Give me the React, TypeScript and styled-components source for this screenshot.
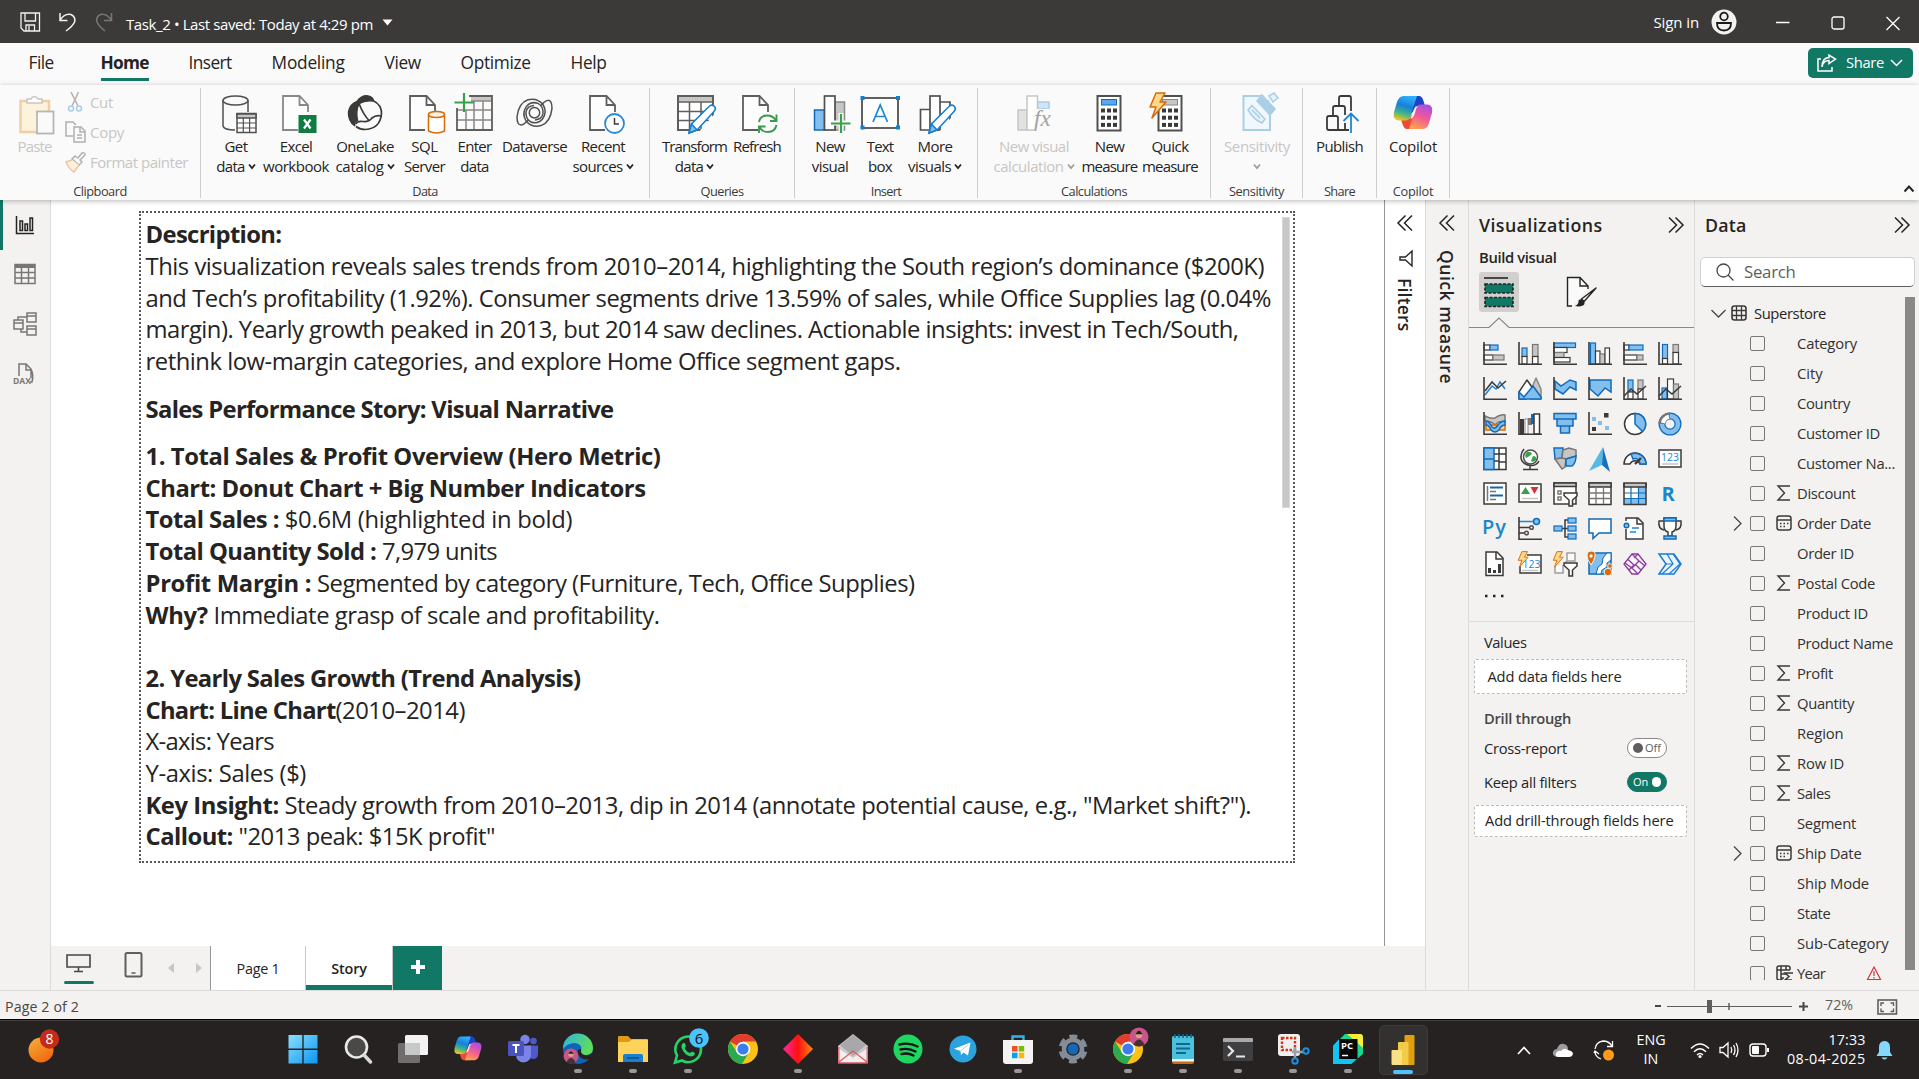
import React, { useLayoutEffect, useRef, useState } from 'react';
import styled, { createGlobalStyle } from 'styled-components';

const GREEN = '#117865';
const INK = '#252423';
const DARK = '#3b3a39';
const BLUE = '#0f6cbd';
const SKY = '#83beec';
const SILVER = '#c8c6c4';

const GlobalStyle = createGlobalStyle`
  * { box-sizing: border-box; }
  html, body { margin: 0; padding: 0; overflow: hidden; }
  body {
    font-family: 'Open Sans', 'Noto Sans', 'Liberation Sans', sans-serif;
    font-stretch: 95%;
    color: ${INK};
    background: #f3f2f1;
  }
  svg { display: block; flex: none; overflow: visible; }
`;

/* Text that is tracked so that its run takes a known length. */
const FitSpan = styled.span<{ $bold?: boolean }>`
  display: inline-block;
  justify-self: start;
  white-space: pre;
  ${(p) => p.$bold && 'font-weight: 700;'}
`;

function Fit({ w, bold, vertical, children }: { w: number; bold?: boolean; vertical?: boolean; children: string }) {
  const ref = useRef<HTMLSpanElement>(null);
  const [spacing, setSpacing] = useState(0);
  useLayoutEffect(() => {
    const el = ref.current;
    if (!el) return;
    const box = el.getBoundingClientRect();
    setSpacing((w - (vertical ? box.height : box.width)) / children.length);
  }, []);
  return (
    <FitSpan ref={ref} $bold={bold} style={{ letterSpacing: spacing }}>
      {children}
    </FitSpan>
  );
}

/* ---------- shell ---------- */

const Shell = styled.div`
  width: 1919px;
  height: 1079px;
  display: flex;
  flex-direction: column;
  overflow: hidden;
`;

const TitleBar = styled.header`
  height: 43px;
  flex: none;
  display: flex;
  align-items: center;
  background: ${DARK};
  color: #fff;
  font-size: 15px;
  padding-left: 20px;
`;
const QuickTools = styled.div`
  display: flex;
  gap: 17px;
  width: 106px;
`;
const FileTitle = styled.div`
  display: flex;
  align-items: center;
  gap: 8.5px;
  line-height: 20px;
  padding-top: 5px;
  flex: 1;
`;
const FileTitleArrow = styled.div`
  margin-top: -4px;
`;
const SignIn = styled.div`
  display: flex;
  align-items: center;
  gap: 12px;
  width: 122.5px;
`;
const WindowButtons = styled.div`
  display: flex;
  align-items: center;
  gap: 41px;
  padding-right: 19px;
`;

const RibbonTabs = styled.nav`
  height: 42px;
  flex: none;
  display: flex;
  align-items: flex-start;
  gap: 40px;
  padding-left: 28.6px;
  background: #fafafa;
`;
const RibbonTab = styled.div<{ $active?: boolean; $wide?: boolean }>`
  height: 38px;
  line-height: 40px;
  font-size: 17.3px;
  font-weight: ${(p) => (p.$active ? 700 : 400)};
  margin-right: ${(p) => (p.$wide ? 7 : 0)}px;
  box-shadow: ${(p) => (p.$active ? `inset 0 -3px ${GREEN}` : 'none')};
`;
const ShareButton = styled.div`
  margin: 5px 6px 0 auto;
  width: 105px;
  height: 30px;
  border-radius: 5px;
  background: ${GREEN};
  color: #fff;
  display: flex;
  align-items: center;
  padding-left: 9px;
  font-size: 14.8px;
  line-height: 30px;
`;
const ShareLabel = styled.span`
  margin: -2px 6px 0 9px;
`;

const Ribbon = styled.div`
  height: 115px;
  flex: none;
  display: flex;
  align-items: flex-start;
  background: #fafafa;
  padding-top: 3px;
  position: relative;
  z-index: 2;
  box-shadow: 0 1px 5px rgba(0, 0, 0, 0.28);
`;
const GroupBox = styled.section<{ $w: number }>`
  width: ${(p) => p.$w}px;
  height: 110px;
  border-right: 1px solid #d0cecc;
  display: flex;
  flex-direction: column;
  padding-top: 4px;
`;
const GroupItems = styled.div<{ $pad: number }>`
  display: flex;
  padding-left: ${(p) => p.$pad}px;
`;
const GroupLabel = styled.div`
  margin-top: auto;
  text-align: center;
  font-size: 12.8px;
  line-height: 14px;
  color: #3b3a39;
`;
const Command = styled.div<{ $w: number; $off?: boolean }>`
  width: ${(p) => p.$w}px;
  display: flex;
  flex-direction: column;
  align-items: center;
  font-size: 15px;
  line-height: 20px;
  color: ${(p) => (p.$off ? '#c8c6c4' : INK)};
`;
const CommandLine = styled.div`
  height: 20px;
  display: flex;
  align-items: center;
  justify-content: center;
  gap: 3px;
  white-space: nowrap;
`;
const ClipRows = styled.div`
  display: flex;
  flex-direction: column;
  margin-left: 10px;
`;
const ClipRow = styled.div`
  height: 30px;
  display: flex;
  align-items: center;
  gap: 3px;
  font-size: 15px;
  line-height: 20px;
  color: #c8c6c4;
  margin-top: -5px;
  margin-bottom: 5px;
`;
const CollapseArrow = styled.div`
  margin: 97px 5px 0 auto;
`;

const Workspace = styled.main`
  height: 790px;
  flex: none;
  display: flex;
  background: #f3f2f1;
`;
const ViewRail = styled.aside`
  width: 51px;
  border-right: 1px solid #dddbd9;
  display: flex;
  flex-direction: column;
`;
const RailItem = styled.div<{ $active?: boolean }>`
  height: 50px;
  display: flex;
  align-items: center;
  justify-content: center;
  padding-right: ${(p) => (p.$active ? 3 : 0)}px;
  padding-bottom: ${(p) => (p.$active ? 0 : 2)}px;
  border-left: ${(p) => (p.$active ? `3px solid ${GREEN}` : '0')};
`;
const Center = styled.div`
  width: 1374px;
  display: flex;
  flex-direction: column;
`;
const CanvasRow = styled.div`
  height: 746px;
  display: flex;
`;
const Canvas = styled.div`
  width: 1333px;
  background: #fff;
  padding: 11px 0 0 88px;
`;
const StoryBox = styled.article`
  width: 1156px;
  height: 652px;
  border: 2px dotted #5a5856;
  display: flex;
  justify-content: space-between;
  padding: 4px 3px 0 4.5px;
  overflow: hidden;
`;
const StoryText = styled.div`
  padding-top: 2.4px;
  font-size: 23.8px;
  line-height: 31.69px;
`;
const StoryLine = styled.div<{ $gap?: boolean }>`
  height: 31.69px;
  white-space: nowrap;
  margin-top: ${(p) => (p.$gap ? 15.8 : 0)}px;
`;
const StoryScroll = styled.div`
  width: 8px;
  height: 291px;
  background: #c8c8c8;
  border: 1px solid #d8d8d8;
`;

const SidePane = styled.aside<{ $w: number; $white?: boolean }>`
  width: ${(p) => p.$w}px;
  background: ${(p) => (p.$white ? '#fff' : '#f3f2f1')};
  border-left: 1px solid ${(p) => (p.$white ? '#979593' : '#dddbd9')};
  display: flex;
  flex-direction: column;
  align-items: center;
  padding-top: 15px;
`;
const VerticalTitle = styled.div`
  writing-mode: vertical-rl;
  font-size: 17.5px;
  font-weight: 600;
  line-height: 24px;
`;

const PageStrip = styled.footer`
  height: 44px;
  display: flex;
  background: #f3f2f1;
`;
const LayoutButton = styled.div<{ $w: number; $active?: boolean }>`
  width: ${(p) => p.$w}px;
  display: flex;
  flex-direction: column;
  align-items: center;
`;
const ActiveMark = styled.div`
  width: 30px;
  height: 3px;
  border-radius: 2px;
  margin-top: 8px;
  background: ${GREEN};
`;
const PageArrows = styled.div`
  width: 51px;
  display: flex;
  gap: 22px;
  padding: 17px 0 0 8px;
  border-right: 1px solid #979593;
`;
const PageTab = styled.div<{ $w: number; $active?: boolean }>`
  width: ${(p) => p.$w}px;
  background: #fff;
  border-right: 1px solid #c8c6c4;
  text-align: center;
  font-size: 14.4px;
  font-weight: ${(p) => (p.$active ? 600 : 400)};
  line-height: 45px;
  box-shadow: ${(p) => (p.$active ? `inset 0 -5px ${GREEN}` : 'none')};
`;
const AddPage = styled.div`
  width: 49px;
  background: ${GREEN};
  display: flex;
  align-items: center;
  justify-content: center;
  padding-bottom: 3px;
`;

/* ---------- visualizations pane ---------- */

const VizPane = styled.aside`
  width: 226px;
  border-left: 1px solid #dddbd9;
  display: flex;
  flex-direction: column;
`;
const PaneHead = styled.div<{ $right: number }>`
  display: flex;
  justify-content: space-between;
  align-items: center;
  height: 24px;
  margin-top: 13px;
  padding: 0 ${(p) => p.$right}px 0 10px;
  font-size: 17.8px;
  font-weight: 600;
  line-height: 24px;
`;
const BuildLabel = styled.div`
  padding-left: 10px;
  margin-top: 10px;
  margin-bottom: 1px;
  font-size: 14.8px;
  font-weight: 600;
  line-height: 20px;
`;
const ModeRow = styled.div`
  display: flex;
  gap: 47px;
  padding: 4px 0 0 10px;
  align-items: center;
`;
const ModeTile = styled.div`
  width: 40px;
  height: 40px;
  border-radius: 3px;
  background: #d2d0ce;
  display: flex;
  align-items: center;
  justify-content: center;
`;
const VizGrid = styled.div`
  display: grid;
  grid-template-columns: repeat(6, 35px);
  grid-auto-rows: 35px;
  padding: 13px 0 0 13.5px;
`;
const More = styled.div`
  padding: 8px 0 0 16px;
  height: 34px;
`;
const WellSection = styled.div`
  border-top: 1px solid #dddbd9;
  padding: 10px 7px 0 5px;
  font-size: 14.7px;
  line-height: 20px;
  display: flex;
  flex-direction: column;
`;
const WellTitle = styled.div<{ $strong?: boolean; $top?: number }>`
  padding-left: 10px;
  height: 20px;
  margin-top: ${(p) => p.$top ?? 0}px;
  ${(p) => p.$strong && 'font-weight: 600; color: #484644;'}
`;
const DropWell = styled.div<{ $h: number; $top: number; $pad: number }>`
  height: ${(p) => p.$h}px;
  margin-top: ${(p) => p.$top}px;
  padding-left: ${(p) => p.$pad}px;
  line-height: ${(p) => p.$h - 3}px;
  background: #fff;
  border: 1px dashed #bebbb8;
  border-radius: 2px;
`;
const ToggleRow = styled.div<{ $top: number }>`
  display: flex;
  justify-content: space-between;
  align-items: center;
  height: 20px;
  margin-top: ${(p) => p.$top}px;
  padding: 0 20px 0 10px;
`;
const Toggle = styled.div<{ $on?: boolean }>`
  width: 40px;
  height: 20px;
  border-radius: 10px;
  border: 1px solid ${(p) => (p.$on ? GREEN : '#8a8886')};
  background: ${(p) => (p.$on ? GREEN : '#fff')};
  color: ${(p) => (p.$on ? '#fff' : '#605e5c')};
  display: flex;
  flex-direction: ${(p) => (p.$on ? 'row-reverse' : 'row')};
  align-items: center;
  gap: ${(p) => (p.$on ? 4 : 2)}px;
  padding: 0 5px;
  font-size: 11px;
`;
const Knob = styled.i<{ $on?: boolean }>`
  width: 10px;
  height: 10px;
  border-radius: 5px;
  background: ${(p) => (p.$on ? '#fff' : '#605e5c')};
`;

/* ---------- data pane ---------- */

const DataPane = styled.aside`
  width: 225px;
  border-left: 1px solid #dddbd9;
  display: flex;
  flex-direction: column;
`;
const SearchBox = styled.div`
  width: 215px;
  height: 30px;
  margin: 20px 0 10px 5px;
  border: 1px solid #d2d0ce;
  border-bottom-color: #605e5c;
  border-radius: 5px;
  background: #fff;
  display: flex;
  align-items: center;
  gap: 10px;
  padding-left: 15px;
  font-size: 16.8px;
  line-height: 30px;
  color: #605e5c;
`;
const TreeArea = styled.div`
  display: flex;
  height: 683px;
  overflow: hidden;
`;
const Tree = styled.div`
  width: 210px;
  padding-top: 1px;
`;
const TreeRoot = styled.div`
  height: 30px;
  display: flex;
  align-items: center;
  padding-left: 16px;
  font-size: 14.8px;
  line-height: 30px;
`;
const RootIcon = styled.div`
  margin: 0 7px 0 5px;
`;
const FieldRow = styled.div`
  height: 30px;
  display: grid;
  grid-template-columns: 17px 26px 21px 1fr 38px;
  align-items: center;
  padding-left: 38px;
  font-size: 14.8px;
  line-height: 30px;
  color: #323130;
  white-space: nowrap;
`;
const CheckBox = styled.div`
  width: 15px;
  height: 15px;
  border: 1px solid #797775;
  border-radius: 2px;
`;
const FieldName = styled.div<{ $wide?: boolean }>`
  grid-column: ${(p) => (p.$wide ? '4 / 6' : '4')};
`;
const TreeScroll = styled.div`
  width: 10px;
  height: 673px;
  background: #8a8886;
`;

/* ---------- status bar ---------- */

const StatusBar = styled.div`
  height: 29px;
  flex: none;
  border-top: 1px solid #dddbd9;
  background: #f3f2f1;
  display: flex;
  align-items: center;
  justify-content: space-between;
  padding: 3px 21px 0 5px;
  font-size: 14.2px;
  line-height: 20px;
  color: #484644;
`;
const ZoomTools = styled.div`
  display: flex;
  align-items: center;
  color: #605e5c;
`;
const ZoomValue = styled.div`
  margin: -3px 24px 0 17px;
`;

/* ---------- taskbar ---------- */

const TaskBar = styled.div`
  height: 60px;
  flex: none;
  background: #252221;
  border-top: 1px solid #000;
  box-shadow: inset 0 1px #43403e;
  display: flex;
  color: #fff;
`;
const WidgetArea = styled.div`
  width: 275.5px;
  padding: 8px 0 0 26px;
`;
const Slot = styled.div<{ $active?: boolean }>`
  width: 55px;
  height: 59px;
  display: flex;
  flex-direction: column;
  align-items: center;
  padding-top: 14px;
`;
const ActiveTile = styled.div`
  width: 49px;
  height: 50px;
  margin-top: -9px;
  padding-top: 9px;
  border-radius: 5px;
  background: #333130;
  border: 1px solid #3e3b3a;
  display: flex;
  flex-direction: column;
  align-items: center;
`;
const RunningDot = styled.i<{ $on?: boolean }>`
  width: ${(p) => (p.$on ? 20 : 8)}px;
  height: 4px;
  border-radius: 2px;
  margin-top: 5px;
  background: ${(p) => (p.$on ? '#4cc2ff' : '#9a9897')};
`;
const Tray = styled.div`
  flex: 1;
  display: flex;
  align-items: center;
  padding-left: 86px;
  padding-top: 1px;
  font-size: 14.3px;
  line-height: 19.5px;
`;
const TrayStack = styled.div<{ $w: number; $right?: boolean }>`
  width: ${(p) => p.$w}px;
  margin-top: -2px;
  display: flex;
  flex-direction: column;
  align-items: ${(p) => (p.$right ? 'flex-end' : 'center')};
`;
const TrayIcon = styled.div<{ $w: number }>`
  width: ${(p) => p.$w}px;
  display: flex;
  justify-content: center;
`;

/* ---------- drawings ---------- */

const Svg = ({ s = 44, h, vb, children }: { s?: number; h?: number; vb?: string; children: React.ReactNode }) => (
  <svg width={s} height={h ?? s} viewBox={vb ?? `0 0 ${s} ${h ?? s}`} fill="none" strokeWidth={1.5}>
    {children}
  </svg>
);

const SmallChevron = ({ c = INK }: { c?: string }) => (
  <Svg s={8} h={8}><path d="M1 2.5 4 6 7 2.5" stroke={c} strokeWidth={1.8} /></Svg>
);
const DoubleChevron = ({ right }: { right?: boolean }) => (
  <Svg s={16} h={16}>
    <path d={right ? 'M1 .5 8.5 8 1 15.5M7.5 .5 15 8 7.500 15.500' : 'M8.500 .5 1 8 8.500 15.500M15 .5 7.500 8 15 15.500'} stroke={INK} />
  </Svg>
);

const Doc = ({ x = 8, c = '#605e5c' }: { x?: number; c?: string }) => (
  <g transform={`translate(${x} 0)`}>
    <path d="M1 4H17.500L26 12.500V38H1Z" fill="#fdfdfd" />
    <path d="M26 20V13L17.500 4H1V38H16M17.500 4V13H26" stroke={c} strokeWidth={1.800} />
  </g>
);
const Pencil = () => (
  <g>
    <path d="M16 41 18.500 32 36.500 14Q39.500 12 41.500 14.500 43.500 17 41 19.500L24 38Z" fill="#fff" stroke="#0f7fd0" />
    <path d="M16 41 18.500 32 24 38Z" fill={SKY} stroke="#0f7fd0" />
  </g>
);
const Calc = ({ x, screen }: { x: number; screen: string }) => (
  <g transform={`translate(${x} 0)`}>
    <rect x={1} y={4} width={23} height={34.500} fill="#fff" stroke="#505050" strokeWidth={2} />
    <rect x={5} y={7.500} width={15} height={5.500} fill={screen} stroke={screen === SILVER ? '#8a8886' : BLUE} strokeWidth={1} />
    {[0, 1, 2].map((r) => [0, 1, 2].map((k) => (
      <rect key={`${r}${k}`} x={4.500 + k * 6} y={16.500 + r * 7.200} width={4} height={4} fill={DARK} />
    )))}
  </g>
);
const Bolt = ({ s = 1 }: { s?: number }) => (
  <path transform={`scale(${s})`} d="M8 1H17L12 10H18L4 26 8 15H2Z" fill="#fcd98a" stroke="#d86a0a" strokeWidth={1.500} strokeLinejoin="round" />
);

const CopilotMark = () => (
  <g>
    <defs>
      <linearGradient id="cpA" x1="0.600" y1="0" x2="0.300" y2="1">
        <stop offset="0" stopColor="#2fb0ff" /><stop offset=".4" stopColor="#1780d8" /><stop offset=".7" stopColor="#3fb489" /><stop offset="1" stopColor="#f2c81c" />
      </linearGradient>
      <linearGradient id="cpB" x1="0.700" y1="0" x2="0.300" y2="1">
        <stop offset="0" stopColor="#a94ee6" /><stop offset=".5" stopColor="#f05a96" /><stop offset="1" stopColor="#ffa04f" />
      </linearGradient>
    </defs>
    <path d="M20 4H28Q31 4 32.500 9L34 14H28Q25 14 24 18L20 22Z" fill="#1a44c2" />
    <path d="M24 37H16Q13 37 11.500 32L10 27.500H16Q19 27 20 23L24 20Z" fill="#ee4c3b" />
    <path d="M12.500 4H26L19.500 24Q18.500 28.500 14 28.500H7.500Q1.500 28 3 20L6 10Q8 4 12.500 4Z" fill="url(#cpA)" />
    <path d="M31.500 37H18L24.500 17Q25.500 12.500 30 12.500H36.500Q42.500 13 41 21L38 31Q36 37 31.500 37Z" fill="url(#cpB)" />
    <path d="M24.500 14.500Q22.500 17 19.500 27 23.500 25.500 24.700 18Q25.500 15 27 14.500Z" fill="#fff" opacity=".9" />
  </g>
);

const swirl = 'M15 28Q11 32.800 8.500 33Q4 33.500 4 25Q5.500 11 15 7.800Q24 5.500 30 12.500Q34.500 20 29.500 27Q25 32.500 18 30Q12.500 27 13 20Q14 14 21 13.500';

const ribbonIcons: Record<string, React.ReactNode> = {
  get: (
    <g stroke="#505050">
      <path d="M9 8.500V34Q10 38 21 38M34 8.500V20" />
      <ellipse cx={21.500} cy={8.500} rx={12.500} ry={4.500} />
      <rect x={23} y={21.500} width={19} height={19} fill="#fff" />
      <path d="M23 22h19v4H23z" fill={SILVER} /><path d="M23 31H42M23 36H42M29.300 26V40M35.600 26V40" strokeWidth={1.200} />
    </g>
  ),
  excel: (
    <g>
      <Doc x={8} c="#8a8886" /><rect x={24.500} y={23} width={18} height={18} fill="#107c41" />
      <path d="M30 27.500 36.500 36.500M36.500 27.500 30 36.500" stroke="#fff" strokeWidth={2.200} />
    </g>
  ),
  lake: (
    <g stroke={DARK}>
      <path d="M30 8.500Q39 13 38.500 22Q37 36.500 22.500 37.500Q17 37.500 13 34.500" strokeWidth={1.700} />
      <path d="M14 9.500Q19 3 25 4Q30 5 30.500 9Q22 8 16 11.500Q12.500 19 14.500 28.500Q10 30 12 34Q5 29 5.500 20Q7 12 14 9.500Z" fill={DARK} />
      <path d="M16 11.500Q20 22 26 28.500M12.500 32Q15 28.500 20 29.500Q26 30 29 26Q33 22.500 38.500 24" strokeWidth={1.700} />
    </g>
  ),
  sql: (
    <g>
      <Doc x={6} /><rect x={24} y={19} width={19} height={23} fill="#fafafa" />
      <path d="M25.500 22.500V39Q33.500 43 41.500 39V22.500" fill="#fff" stroke="#d86a0a" />
      <ellipse cx={33.500} cy={22.500} rx={8} ry={3} fill="#fff3e6" stroke="#d86a0a" />
    </g>
  ),
  enter: (
    <g>
      <path d="M18 4H39V9H18Z" fill={SILVER} />
      <path d="M21 9V38M4 18H39M4 28H39M13 18V38M30 9V38M18 9H39" stroke="#8a8886" />
      <path d="M4 16V38H39V4H16" stroke="#605e5c" strokeWidth={1.800} />
      <path d="M7 6H15V15H7Z" fill="#fafafa" />
      <path d="M11 1V20M1.500 10.500H21" stroke="#37a24a" strokeWidth={2.200} />
    </g>
  ),
  dataverse: (
    <g stroke="#505050" strokeWidth={1.500}>
      <path d={swirl} /><path d={swirl} transform="rotate(180 21.500 20.700)" />
      <circle cx={21.500} cy={20.700} r={5.200} />
    </g>
  ),
  recent: (
    <g>
      <Doc x={8} /><circle cx={33.500} cy={31.500} r={9.500} fill="#fff" stroke="#2b88d8" strokeWidth={1.800} />
      <path d="M33.500 26V32H38" stroke={DARK} />
    </g>
  ),
  transform: (
    <g>
      <rect x={5} y={4} width={35} height={34} fill="#fff" stroke="#605e5c" strokeWidth={2} />
      <path d="M6 5H39V9.500H6Z" fill={SILVER} />
      <path d="M5 10H40M5 19.500H40M5 28.500H40M16.500 10V38M28 10V38" stroke="#605e5c" />
      <path d="M24 42 44 19V42Z" fill="#fafafa" /><Pencil />
    </g>
  ),
  refresh: (
    <g>
      <Doc x={7} /><rect x={23} y={21} width={20} height={21} fill="#fafafa" />
      <path d="M24 30Q25 23.500 32 23.500Q38 23.500 41 28.500M41.500 22.500V29H35M41.500 33Q40 40 33 40Q27 40 24.500 35M24 41V34.500H30.500" stroke="#3a9a50" strokeWidth={1.900} />
    </g>
  ),
  newVisual: (
    <g>
      <rect x={27} y={10} width={9.500} height={28} fill={SILVER} stroke="#8a8886" />
      <rect x={6.500} y={18} width={10} height={20} fill={SKY} stroke={BLUE} />
      <rect x={16.500} y={4} width={10.500} height={34} fill="#fff" stroke="#505050" strokeWidth={1.700} />
      <path d="M33 21V41M23 31H42.500" stroke="#fafafa" strokeWidth={5} />
      <path d="M33 22V41M23 31.500H42.500" stroke="#37a24a" strokeWidth={2.200} />
    </g>
  ),
  textBox: (
    <g>
      <rect x={4} y={6} width={36} height={30} fill="#fff" stroke="#505050" strokeWidth={1.800} />
      {[[2.500, 4], [38, 4], [2.500, 33.500], [38, 33.500]].map(([x, y]) => <rect key={`${x}${y}`} x={x} y={y} width={4} height={4} fill="#0f7fd0" />)}
      <path d="M15 30 22.200 13 29.500 30M17.500 24.500H27" stroke="#1b87d6" strokeWidth={1.700} />
    </g>
  ),
  moreVisuals: (
    <g>
      <path d="M27 38H37V10H27M17 17.500H7.500V38H17" fill="#fff" stroke="#505050" strokeWidth={1.700} />
      <rect x={17} y={4} width={10} height={34} fill="#fff" stroke="#505050" strokeWidth={1.700} />
      <path d="M24 42 44 19V42Z" fill="#fafafa" /><Pencil />
    </g>
  ),
  newCalc: (
    <g>
      <rect x={6} y={18} width={9} height={20} fill="#e3e2e1" stroke="#c8c6c4" />
      <path d="M25.500 10H37V17H25.500Z" fill="#cfe4f6" stroke="#a8cdea" />
      <rect x={15} y={4} width={10.500} height={34} fill="#fff" stroke="#c8c6c4" />
      <rect x={22} y={17} width={22} height={22} fill="#fafafa" />
      <text x={22} y={34} fontSize={23} fontStyle="italic" fontFamily="Liberation Serif, serif" fill="#a3a19f">fx</text>
    </g>
  ),
  newMeasure: <Calc x={8.500} screen="#5aa7ee" />,
  quick: <g><Calc x={9.500} screen={SILVER} /><Bolt /></g>,
  sensitivity: (
    <g stroke="#a9cfe6">
      <path d="M28 4H8.500V38H35V20" fill="#f1f8fc" strokeWidth={2} />
      <path d="M13 18 17 13.500 30 27 27 31Q19 28 13 18ZM17 18 25 26M22 9 27 3 40 17 34 22ZM30 12 34 8M34 4 39 1 43 6 38 10ZM36 22 40 17" fill="#e6f2fa" />
      <path d="M23 9 35 21 39 17 27 5Z" fill="#a9cfe6" />
    </g>
  ),
  publish: (
    <g stroke="#3b3a39" strokeWidth={1.800}>
      <path d="M21 14V6Q21 4 23 4H31Q33 4 33 6V19M15 23V16Q15 14 17 14H25Q27 14 27 16V23M9 26Q9 24 11 24H18Q20 24 20 26V38H11Q9 38 9 36ZM20 38H31M27 31V38" />
      <path d="M33 41V22M25.500 29 33 21.500 40.500 29" stroke="#1b87d6" />
    </g>
  ),
  copilot: <CopilotMark />,
};

const Clipboard = () => (
  <Svg s={36} h={40}>
    <path d="M1.500 6H30V37H1.500Z" fill="#fdf3dc" stroke="#f0cfa5" strokeWidth={2.500} />
    <path d="M8 8V4H12Q15-1 19 4H23V8Z" fill="#fff" stroke="#c8c6c4" />
    <rect x={18} y={16.500} width={16.500} height={22} fill="#fafafa" stroke="#b8b6b4" strokeWidth={1.800} />
  </Svg>
);
const ScissorsIcon = () => (
  <Svg s={22} h={22}>
    <path d="M6 1 13 15M13.500 1 7 15" stroke="#b3b0ad" />
    <circle cx={6} cy={17.500} r={2.500} stroke="#a9cfe6" /><circle cx={14} cy={17.500} r={2.500} stroke="#a9cfe6" />
  </Svg>
);
const CopyIcon = () => (
  <Svg s={22} h={22}>
    <path d="M8 15H1V1H8L11 4" stroke="#b3b0ad" />
    <path d="M9 6H16L20 10V21H9ZM15 6V11H20M12 14H17M12 17H17" stroke="#b3b0ad" fill="#fafafa" />
  </Svg>
);
const BrushIcon = () => (
  <Svg s={22} h={22}>
    <path d="M13 7 17 2Q20 1 20 4L15 9 17 11 14 14 7 8 10 5Z" stroke="#b3b0ad" fill="#fafafa" />
    <path d="M7 9 1 11Q4 18 9 21L14 14" stroke="#f0c79a" fill="#fdf0e0" />
  </Svg>
);

const Axes = () => <path d="M1 0V22.200H24" stroke={DARK} strokeWidth={1.600} />;
type BarSpec = [number, number, number, number, 'b' | 'w' | 'g'];
const Bars = ({ d }: { d: BarSpec[] }) => (
  <g>
    {d.map(([x, y, w, h, k], i) => (
      <rect key={i} x={x} y={y} width={w} height={h} strokeWidth={1.200}
        fill={k === 'b' ? SKY : k === 'g' ? SILVER : '#fff'} stroke={k === 'b' ? BLUE : k === 'g' ? '#797775' : DARK} />
    ))}
    <Axes />
  </g>
);

const vizIcons: React.ReactNode[] = [
  <Bars d={[[1, 3, 6, 5, 'w'], [7, 3, 8, 5, 'b'], [1, 13, 9, 5, 'w'], [10, 13, 11, 5, 'g']]} />,
  <Bars d={[[4, 6, 5, 8.500, 'b'], [4, 14.500, 5, 7.500, 'w'], [14.500, 2.500, 5.500, 12, 'g'], [14.500, 14.500, 5.500, 7.500, 'w']]} />,
  <Bars d={[[1, 1, 21.500, 4.500, 'b'], [1, 5.500, 13, 5, 'w'], [1, 10.500, 10, 5, 'g'], [1, 15.500, 16, 4.500, 'w']]} />,
  <Bars d={[[2.500, 1, 5, 21, 'b'], [7.500, 9, 4.500, 13, 'w'], [12, 12, 5, 10, 'g'], [17, 6, 4.500, 16, 'w']]} />,
  <Bars d={[[1, 3, 5, 5, 'w'], [6, 3, 14, 5, 'b'], [1, 13, 13, 5, 'w'], [14, 13, 6, 5, 'g']]} />,
  <Bars d={[[4.500, 2.500, 5, 14, 'b'], [4.500, 16.500, 5, 5.500, 'w'], [15, 2.500, 5.500, 8, 'g'], [15, 10.500, 5.500, 11.500, 'w']]} />,
  <g><path d="M2 18 9 9 13 12 17 5 22 12" stroke="#1b87d6" /><path d="M2 14 9 5 15 11 23 4" stroke={DARK} /><Axes /></g>,
  <g strokeLinejoin="round"><path d="M12 15 18 1 23 12V22H12Z" fill={SILVER} stroke="#8a8886" /><path d="M1 15 9 3 16 13 8 22H1Z" fill="#fff" stroke={DARK} /><path d="M1 15 6 20 15 9 23 20V22H1Z" fill={SKY} stroke={BLUE} /></g>,
  <g><path d="M2 4 8 9 17 3 23 5V13L17 10 10 17 2 12Z" fill={SKY} stroke={BLUE} /><Axes /></g>,
  <g><path d="M2 3H23V15L17 11 10 19 2 12Z" fill={SKY} stroke={BLUE} /><Axes /></g>,
  <g><Bars d={[[5, 3, 5, 12, 'b'], [5, 15, 5, 7, 'w'], [15, 3, 5, 9, 'g'], [15, 12, 5, 10, 'w']]} /><path d="M1 19 8 12 14 17 23 9" stroke={DARK} /></g>,
  <g><Bars d={[[4, 11, 5, 11, 'b'], [9.500, 2, 6, 20, 'w'], [15.500, 7, 5, 15, 'g']]} /><path d="M1 19 8 12 14 17 23 9" stroke={DARK} /></g>,
  <g><path d="M2 4Q8 7 12 6 18 2 22 3V10Q16 8 12 13 8 9 2 9Z" fill={SILVER} stroke="#797775" /><path d="M3 13H22V18H3Z" fill="#fcc98a" stroke="#d86a0a" /><path d="M3 9Q6 9 9 15 12 18 15 13 18 9 22 9V13Q18 13 16 18 12 22 8 18 6 13 3 13Z" fill={SKY} stroke={BLUE} /><Axes /></g>,
  <g><rect x={2} y={7} width={4} height={15} fill={DARK} /><rect x={7} y={7} width={3} height={15} fill="#fff" stroke="#8a8886" strokeWidth={1} /><rect x={10} y={6} width={4} height={7} fill="#797775" /><rect x={13} y={2} width={3} height={10} fill={BLUE} /><rect x={16} y={2} width={5.500} height={20} fill="#fff" stroke={DARK} /><Axes /></g>,
  <g fill={SKY} stroke={BLUE}><path d="M1 1.500H23V7H1ZM4 7H20V14H4ZM7.500 14H16.500V21H7.500Z" /></g>,
  <g><rect x={16} y={1} width={4.500} height={4.500} fill={DARK} /><rect x={4} y={5} width={4} height={4} fill={SKY} /><rect x={10} y={9} width={4} height={4} fill={SKY} /><rect x={17} y={14} width={4} height={4} fill={SKY} /><rect x={4} y={15} width={4} height={4} fill={DARK} /><Axes /></g>,
  <g><circle cx={12} cy={12} r={10.500} fill="#fff" stroke={DARK} /><path d="M12 1.500A10.500 10.500 0 0 1 19.500 19.500L12 12Z" fill={SKY} stroke={BLUE} /></g>,
  <g><circle cx={12} cy={12} r={8} stroke={BLUE} strokeWidth={7} /><circle cx={12} cy={12} r={8} stroke={SKY} strokeWidth={4.500} /><path d="M4 12A8 8 0 0 1 12 4" stroke="#797775" strokeWidth={7} /><path d="M5 11A8 8 0 0 1 11 4.800" stroke="#fff" strokeWidth={4} /></g>,
  <g><rect x={1} y={1} width={22} height={21.500} fill="#fff" stroke={DARK} /><path d="M1 1H11V22.500H1ZM1 12H11" fill={SKY} stroke={BLUE} /><path d="M11 7H23M16 7V22M11 14H16M16 15H23M16 1V7" stroke={DARK} /></g>,
  <g><circle cx={12.500} cy={10} r={7} fill="#fff" stroke="#505050" /><path d="M9 5Q13 4 14 7 12 9 8 11 6 8 9 5ZM15 9Q19 9 18 13 15 16 13 14Z" fill="#37a24a" /><path d="M6 2Q1 8 4 14 8 19 14 18.500 19 18 21 14M12 19V22M5 22.500H20" stroke={DARK} /></g>,
  <g><path d="M1 1H10L9 11 2 12Z" fill={SKY} stroke={BLUE} /><path d="M10 3 16 1 23 3V9L14 12 9 11ZM2 12 9 11 13 12 12 20 9 22Z" fill={SILVER} stroke="#797775" /><path d="M13 12 23 9Q23 16 19 19L13 19Z" fill={SKY} stroke={BLUE} /></g>,
  <g><path d="M15 0 1 24 14 18Z" fill="#56b8e6" /><path d="M15 0 14 18 22 25Z" fill="#1672b8" /></g>,
  <g><path d="M1 17A11 11 0 0 1 23 17H17A5.500 5.500 0 0 0 7 17Z" fill="#fff" stroke={DARK} /><path d="M8 7A11 11 0 0 1 23 17H17A5 5 0 0 0 10 12Z" fill={SKY} stroke={BLUE} /><path d="M12 17 18 11" stroke={DARK} strokeWidth={2.400} /></g>,
  <g><rect x={1} y={3} width={22} height={17} fill="#fff" stroke={DARK} /><text x={3} y={14} fontSize={10.500} fill="#1b87d6">123</text><path d="M4 17H20" stroke={SILVER} /></g>,
  <g><rect x={1} y={1} width={22} height={21} fill="#fff" stroke={DARK} /><path d="M4.500 4V19" stroke="#797775" /><path d="M7 5.500H20M7 13.500H20" stroke="#1268b0" strokeWidth={2.200} /><path d="M7 9.500H13M7 17.500H13" stroke="#797775" /></g>,
  <g><rect x={1} y={2} width={22} height={18} fill="#fff" stroke={DARK} /><path d="M3 12 7.500 5 12 12Z" fill="#37a24a" /><path d="M12.500 5H20.500L16.500 12Z" fill="#d13438" /><path d="M4 16.500H20" stroke={SILVER} /></g>,
  <g><rect x={1} y={1} width={22} height={21} fill="#fff" stroke={DARK} /><path d="M1 1H23V4.500H1Z" fill={SILVER} stroke={DARK} /><path d="M5 9H8V12H5ZM5 15H8V18H5Z" stroke="#797775" /><path d="M11 11H24V14L19.500 18V24H16V18L11 13.500Z" fill="#fff" stroke={DARK} /></g>,
  <g><rect x={1} y={1} width={22} height={21.500} fill="#fff" stroke={DARK} /><path d="M1 1H23V5H1Z" fill={SILVER} stroke={DARK} /><path d="M1 11H23M1 16.500H23M8 5V22M15.500 5V22" stroke="#797775" strokeWidth={1.300} /></g>,
  <g><rect x={1} y={1} width={22} height={21.500} fill="#fff" /><path d="M15.500 5H23V22.500H1V16.500H15.500Z" fill={SKY} /><path d="M1 11H23M1 16.500H23M8 5V22M15.500 5V22" stroke={BLUE} strokeWidth={1.200} /><path d="M1 1H23V5H1Z" fill={SILVER} stroke={DARK} /><path d="M1 1V22.500H23V1" stroke={DARK} /></g>,
  <text x={3.500} y={18.500} fontSize={20} fontWeight={700} fill="#1b87c9">R</text>,
  <text x={-1} y={16.500} fontSize={20} fontWeight={600} fill="#1b87c9" textLength={24}>Py</text>,
  <g><path d="M1 4.500H15" stroke="#1b87d6" /><circle cx={18.500} cy={4.500} r={3} fill={SKY} stroke={BLUE} /><path d="M1 10.500H12M1 16H7" stroke={DARK} /><circle cx={13.500} cy={10.500} r={1.800} stroke="#505050" /><circle cx={8.500} cy={16} r={1.800} stroke="#505050" /><Axes /></g>,
  <g><path d="M8 11.500H12M15 3H12V20H15M12 11.500H15" stroke={DARK} /><g fill={SKY} stroke={BLUE} strokeWidth={1.200}><rect x={1} y={9} width={8} height={5} /><rect x={15} y={1} width={8} height={5} /><rect x={15} y={9} width={8} height={5} /><rect x={15} y={17} width={8} height={5} /></g></g>,
  <path d="M1 2H23V16H11L5 21.500V16H1Z" fill="#fff" stroke="#1268b0" />,
  <g><path d="M3 4V1H15L20 6V22H3V12" fill="#fff" stroke={DARK} /><path d="M14 1V7H20" stroke={DARK} /><circle cx={3.500} cy={8.500} r={2.300} fill={SKY} stroke={BLUE} /><path d="M9 11H16M7 15H13" stroke="#1b87d6" /></g>,
  <g><path d="M6 4H1Q0 12 6 13M18 4H23Q24 12 18 13" stroke={DARK} /><path d="M6 1H18V9Q18 14 14 15V19H10V15Q6 14 6 9Z" fill="#fff" stroke={DARK} /><path d="M6 1H18V4H6ZM6 19H18V22H6Z" fill={SKY} stroke={BLUE} /></g>,
  <g><path d="M3 0H14L20 6V23.500H3Z" fill="#fff" stroke={DARK} /><path d="M13 0V7H20" stroke={DARK} /><path d="M5 16H8V21H5ZM10 18H13V21H10ZM15 12H18V21H15Z" fill={DARK} /></g>,
  <g><path d="M9 3H23V21H2V14" fill="#fff" stroke={DARK} /><text x={4.500} y={16} fontSize={10.500} fill="#1b87d6">123</text><path d="M4 18.500H20" stroke={SILVER} /><g transform="translate(-1 -1)"><Bolt s={0.620} /></g></g>,
  <g><path d="M14 1H22V9H14ZM2 14V21H10V13M13 14V9" stroke="#a19f9d" fill="#fafafa" /><path d="M11 11H24V14L19.500 18V24H16V18L11 13.500Z" fill="#fff" stroke={DARK} /><g transform="translate(-1 -1)"><Bolt s={0.620} /></g></g>,
  <g><path d="M1 1H23V22H1Z" fill={SKY} stroke="#1268b0" /><path d="M19 1H23V8L19 11V15L14 18 13 22H8L10 15 14 12 15 6Z" fill="#fff" stroke="#1268b0" strokeWidth={1} /><path d="M-1 3Q-1-1 3-1 8-1 7 4 6 9 3 13-1 8-1 3Z" fill="#d86a0a" stroke="#f3f2f1" strokeWidth={1} /><circle cx={3} cy={4} r={1.700} fill="#fff" /><circle cx={20} cy={20} r={3.800} fill="#d86a0a" stroke="#f3f2f1" strokeWidth={1} /><circle cx={22} cy={14} r={2.300} fill="#d86a0a" stroke="#f3f2f1" strokeWidth={0.800} /></g>,
  <g stroke="#8a3a9c" strokeWidth={1.300} strokeLinejoin="round"><path d="M9 2H15L23 12 15 22H9L1 12Z" fill="#fbf3fc" /><path d="M9 2 16 9 9 16 2 11M15 22 9 16M16 9 22 14M12.500 12.500 18 18M5 7.500 11 13 6 18M15 2 11 6" /></g>,
  <g stroke="#1a7bd8"><path d="M1 2H16L23 12 16 22H1L8 12Z" fill="#eaf4fd" /><path d="M9 2 15 12 4 22M8 12H15M15 2 22 12 11 22" strokeWidth={1.200} /></g>,
];

/* ---------- ribbon content ---------- */

type Label = { t: string; w: number; arrow?: boolean };
type CommandSpec = { icon: string; w: number; lines: Label[]; off?: boolean };
type GroupSpec = { label: string; lw: number; w: number; pad: number; items: CommandSpec[] };

const groups: GroupSpec[] = [
  {
    label: 'Data', lw: 25.5, w: 449, pad: 11, items: [
      { icon: 'get', w: 48, lines: [{ t: 'Get', w: 23 }, { t: 'data', w: 28.5, arrow: true }] },
      { icon: 'excel', w: 72, lines: [{ t: 'Excel', w: 32.5 }, { t: 'workbook', w: 66 }] },
      { icon: 'lake', w: 66, lines: [{ t: 'OneLake', w: 57.5 }, { t: 'catalog', w: 48, arrow: true }] },
      { icon: 'sql', w: 53, lines: [{ t: 'SQL', w: 26.5 }, { t: 'Server', w: 41 }] },
      { icon: 'enter', w: 47, lines: [{ t: 'Enter', w: 34 }, { t: 'data', w: 28.5 }] },
      { icon: 'dataverse', w: 73, lines: [{ t: 'Dataverse', w: 65 }] },
      { icon: 'recent', w: 64, lines: [{ t: 'Recent', w: 44 }, { t: 'sources', w: 50, arrow: true }] },
    ],
  },
  {
    label: 'Queries', lw: 43, w: 145, pad: 8, items: [
      { icon: 'transform', w: 73, lines: [{ t: 'Transform', w: 65 }, { t: 'data', w: 28.5, arrow: true }] },
      { icon: 'refresh', w: 52, lines: [{ t: 'Refresh', w: 48 }] },
    ],
  },
  {
    label: 'Insert', lw: 30.500, w: 183, pad: 12, items: [
      { icon: 'newVisual', w: 46, lines: [{ t: 'New', w: 29.5 }, { t: 'visual', w: 36.5 }] },
      { icon: 'textBox', w: 54, lines: [{ t: 'Text', w: 26.5 }, { t: 'box', w: 24 }] },
      { icon: 'moreVisuals', w: 56, lines: [{ t: 'More', w: 35 }, { t: 'visuals', w: 43, arrow: true }] },
    ],
  },
  {
    label: 'Calculations', lw: 66, w: 233, pad: 12, items: [
      { icon: 'newCalc', w: 88, off: true, lines: [{ t: 'New visual', w: 70 }, { t: 'calculation', w: 70, arrow: true }] },
      { icon: 'newMeasure', w: 63, lines: [{ t: 'New', w: 29.5 }, { t: 'measure', w: 56 }] },
      { icon: 'quick', w: 58, lines: [{ t: 'Quick', w: 37 }, { t: 'measure', w: 56 }] },
    ],
  },
  { label: 'Sensitivity', lw: 55, w: 92, pad: 9, items: [{ icon: 'sensitivity', w: 74, off: true, lines: [{ t: 'Sensitivity', w: 66 }, { t: '', w: 0, arrow: true }] }] },
  { label: 'Share', lw: 31, w: 74, pad: 8, items: [{ icon: 'publish', w: 57, lines: [{ t: 'Publish', w: 47 }] }] },
  { label: 'Copilot', lw: 40.500, w: 73, pad: 8, items: [{ icon: 'copilot', w: 56, lines: [{ t: 'Copilot', w: 48 }] }] },
];

const tabs: [string, number][] = [['File', 25], ['Home', 48], ['Insert', 43], ['Modeling', 73], ['View', 36], ['Optimize', 70], ['Help', 36]];

function RibbonGroup({ g }: { g: GroupSpec }) {
  return (
    <GroupBox $w={g.w}>
      <GroupItems $pad={g.pad}>
        {g.items.map((c) => (
          <Command key={c.icon} $w={c.w} $off={c.off}>
            <Svg>{ribbonIcons[c.icon]}</Svg>
            {c.lines.map((l, i) => (
              <CommandLine key={i}>
                {l.t && <Fit w={l.w}>{l.t}</Fit>}
                {l.arrow && <SmallChevron c={c.off ? '#a19f9d' : INK} />}
              </CommandLine>
            ))}
          </Command>
        ))}
      </GroupItems>
      <GroupLabel><Fit w={g.lw}>{g.label}</Fit></GroupLabel>
    </GroupBox>
  );
}

/* ---------- story content ---------- */

type Run = [string, number, boolean?];
const story: { gap?: boolean; runs: Run[] }[] = [
  { runs: [['Description:', 136, true]] },
  { runs: [['This visualization reveals sales trends from 2010–2014, highlighting the South region’s dominance ($200K)', 1118.500]] },
  { runs: [['and Tech’s profitability (1.92%). Consumer segments drive 13.59% of sales, while Office Supplies lag (0.04%', 1125.500]] },
  { runs: [['margin). Yearly growth peaked in 2013, but 2014 saw declines. Actionable insights: invest in Tech/South,', 1093]] },
  { runs: [['rethink low-margin categories, and explore Home Office segment gaps.', 755]] },
  { gap: true, runs: [['Sales Performance Story: Visual Narrative', 468, true]] },
  { gap: true, runs: [['1. Total Sales & Profit Overview (Hero Metric)', 515, true]] },
  { runs: [['Chart: Donut Chart + Big Number Indicators', 500, true]] },
  { runs: [['Total Sales : ', 139.300, true], ['$0.6M (highlighted in bold)', 287.500]] },
  { runs: [['Total Quantity Sold : ', 236.500, true], ['7,979 units', 115]] },
  { runs: [['Profit Margin : ', 171.500, true], ['Segmented by category (Furniture, Tech, Office Supplies)', 597.500]] },
  { runs: [['Why? ', 68, true], ['Immediate grasp of scale and profitability.', 446]] },
  { runs: [] },
  { runs: [['2. Yearly Sales Growth (Trend Analysis)', 435, true]] },
  { runs: [['Chart: Line Chart', 190, true], ['(2010–2014)', 129.500]] },
  { runs: [['X-axis: Years', 128.500]] },
  { runs: [['Y-axis: Sales ($)', 160.500]] },
  { runs: [['Key Insight: ', 139, true], ['Steady growth from 2010–2013, dip in 2014 (annotate potential cause, e.g., "Market shift?").', 966.500]] },
  { runs: [['Callout: ', 93, true], ['"2013 peak: $15K profit"', 256.500]] },
];

/* ---------- data fields ---------- */

type Field = { n: string; w: number; k?: 'sum' | 'date' | 'calc' };
const fields: Field[] = [
  { n: 'Category', w: 60 }, { n: 'City', w: 25.500 }, { n: 'Country', w: 53 }, { n: 'Customer ID', w: 83 },
  { n: 'Customer Na...', w: 98 }, { n: 'Discount', w: 58.500, k: 'sum' }, { n: 'Order Date', w: 74, k: 'date' },
  { n: 'Order ID', w: 57 }, { n: 'Postal Code', w: 78, k: 'sum' }, { n: 'Product ID', w: 71 }, { n: 'Product Name', w: 96 },
  { n: 'Profit', w: 36, k: 'sum' }, { n: 'Quantity', w: 57, k: 'sum' }, { n: 'Region', w: 46.500 },
  { n: 'Row ID', w: 47, k: 'sum' }, { n: 'Sales', w: 33.500, k: 'sum' }, { n: 'Segment', w: 59 },
  { n: 'Ship Date', w: 64.500, k: 'date' }, { n: 'Ship Mode', w: 72 }, { n: 'State', w: 33.500 },
  { n: 'Sub-Category', w: 91.500 }, { n: 'Year', w: 28, k: 'calc' },
];

const fieldGlyph: Record<string, React.ReactNode> = {
  sum: <Svg s={16}><path d="M14 1H2L8.500 8 2 15H14" stroke={DARK} strokeWidth={1.400} /></Svg>,
  date: (
    <Svg s={16}>
      <rect x={1} y={1} width={14} height={14} rx={2.500} stroke={DARK} /><path d="M1 5H15" stroke={DARK} />
      <path d="M4 8.500H5.500M7.500 8.500H9M11 8.500H12.500M4 11.500H5.500M7.500 11.500H9" stroke={DARK} />
    </Svg>
  ),
  calc: (
    <Svg s={18} h={16}>
      <path d="M14 5V3Q14 1 12 1H3Q1 1 1 3V13Q1 15 3 15H7M5 1V15M1 5H14M5 9H10M10 1V5" stroke={DARK} />
      <path d="M17 8H9L13 11.500 9 15H16M5 13H8" stroke={DARK} />
    </Svg>
  ),
};

/* ---------- taskbar icons ---------- */

const ChromeMark = () => (
  <g>
    <circle cx={15} cy={15} r={15} fill="#fbc116" />
    <path d="M15 15 2 7.500A15 15 0 0 1 28 7.500H15Z" fill="#e33b2e" />
    <path d="M2 7.500A15 15 0 0 0 14 30L21 18.500 9 18.500Z" fill="#2da94f" />
    <circle cx={15} cy={15} r={7.200} fill="#fff" /><circle cx={15} cy={15} r={5.600} fill="#3b7ded" />
  </g>
);
const Face = ({ x, y, r }: { x: number; y: number; r: number }) => (
  <g transform={`translate(${x} ${y})`}>
    <circle r={r} fill="#c9558a" /><path d={`M${-r * 0.6} ${r * 0.8}Q0 ${-r * 0.3} ${r * 0.6} ${r * 0.8}Q0 ${r * 1.2} ${-r * 0.6} ${r * 0.8}Z`} fill="#453038" />
    <circle cy={-r * 0.25} r={r * 0.36} fill="#d9a184" /><path d={`M${-r * 0.38} ${-r * 0.3}Q0 ${-r} ${r * 0.38} ${-r * 0.3}Z`} fill="#2a1c1c" />
  </g>
);

type TaskApp = { id: string; icon: React.ReactNode; run?: boolean; active?: boolean };
const apps: TaskApp[] = [
  { id: 'start', icon: <g><defs><linearGradient id="win" x1="0" y1="0" x2="1" y2="1"><stop offset="0" stopColor="#8be0ff" /><stop offset="1" stopColor="#0a95f0" /></linearGradient></defs><path d="M.5 1H14.300V14.600H.5ZM15.700 1H29.500V14.600H15.700ZM.5 16H14.300V29.500H.5ZM15.700 16H29.500V29.500H15.700Z" fill="url(#win)" /></g> },
  { id: 'search', icon: <g><circle cx={13.500} cy={13} r={10.500} fill="#4b4948" stroke="#e9e9e9" strokeWidth={2.600} /><path d="M21 21 27.500 28" stroke="#d5dade" strokeWidth={3.500} strokeLinecap="round" /></g> },
  { id: 'tasks', icon: <g><rect x={7} y={1} width={23} height={20} rx={1.500} fill="#f2f2f2" /><rect x={0} y={9} width={22} height={20} rx={1.500} fill="#7c7b7a" opacity={0.850} /><rect x={7} y={9} width={15} height={12} fill="#c9c8c8" /></g> },
  { id: 'copilot', icon: <g transform="translate(-.5 -.5) scale(.7 .72)"><CopilotMark /></g> },
  { id: 'teams', icon: <g><circle cx={17} cy={5.500} r={4.700} fill="#7b83eb" /><circle cx={25.500} cy={7} r={3.300} fill="#5059c9" /><path d="M21 11.500H30V20Q30 25 25 25 21 25 21 20Z" fill="#5059c9" /><path d="M8 11.500H23V20Q23 28 15.500 28.500 8 28 8 20Z" fill="#7b83eb" /><rect x={0} y={7} width={16} height={15} rx={1.500} fill="#4b53bc" /><path d="M4.500 11H11.500M8 11V19" stroke="#fff" strokeWidth={2} /></g> },
  { id: 'edge', run: true, icon: <g><defs><linearGradient id="edgeA" x1="0" y1="0" x2="1" y2=".4"><stop offset="0" stopColor="#2bb4e8" /><stop offset="1" stopColor="#5fdc5a" /></linearGradient></defs><circle cx={15} cy={15} r={15} fill="#0f64b8" /><path d="M0 15A15 15 0 0 1 30 14Q30 21 23 21 17 21 18 17 20 10 12 9 4 9 0 15Z" fill="url(#edgeA)" /><path d="M30 24Q20 28 15 21 13 15 18 15 17 21 24 21.500 28 21 30 18Z" fill="#252221" /><Face x={8} y={22} r={7.500} /></g> },
  { id: 'explorer', run: true, icon: <g><path d="M0 3Q0 2 1 2H10L13 5H29Q30 5 30 6V12H0Z" fill="#e09b12" /><path d="M0 8H11L14 5.500H29Q30 5.500 30 7V28H0Z" fill="#ffd35a" /><path d="M5 28V22Q5 20 7 20H23Q25 20 25 22V28Z" fill="#1b7fcf" /><path d="M9 24H21" stroke="#0c5a9c" strokeWidth={2} /></g> },
  { id: 'whatsapp', run: true, icon: <g><path d="M2 28.500 4 21.500A12.800 12.800 0 1 1 9 26.500Z" stroke="#27d366" strokeWidth={2.600} /><path d="M10 9Q12 8 13 12 11 14 12 15 14 18 17 19L19 17.500 22 19Q22 22 18 22.500 11 21 8.500 13.500 8 10.500 10 9Z" fill="#27d366" /><circle cx={26} cy={4} r={9.800} fill="#4cc2ff" /><text x={26} y={9.500} fontSize={15} textAnchor="middle" fill="#111">6</text></g> },
  { id: 'chrome', icon: <ChromeMark /> },
  { id: 'diamond', run: true, icon: <g><defs><linearGradient id="dia"><stop offset="0" stopColor="#ff28a0" /><stop offset=".5" stopColor="#ff1010" /><stop offset="1" stopColor="#ff8a10" /></linearGradient></defs><path d="M15 0 30 15 15 30 0 15Z" fill="url(#dia)" /></g> },
  { id: 'mail', icon: <g><path d="M0 12 15 0 30 12V29H0Z" fill="#c9c9cb" /><path d="M2 11 15 1 28 11 15 22Z" fill="#a8a8aa" /><path d="M0 14 15 24 30 14V29H0Z" fill="#f3eff0" /><path d="M1 28 15 17 29 28M.8 13V29H29.200V13" stroke="#dd5a64" strokeWidth={1.300} /></g> },
  { id: 'spotify', icon: <g><circle cx={15} cy={15} r={14.500} fill="#1ed760" /><path d="M6.500 10.500Q16 8 24.500 12.500M7.500 15.500Q15.500 13.500 22.500 17.500M8.500 20Q15 18.500 20.500 21.500" stroke="#191414" strokeWidth={2.400} strokeLinecap="round" /></g> },
  { id: 'telegram', icon: <g><circle cx={15} cy={15} r={13.500} fill="#2ba3de" /><path d="M6 14.800 22.500 8.500 20 21.500 15.500 18.500 13 21 12.500 17Z" fill="#fff" /><path d="M12.500 17 20 10.800" stroke="#9fd2ee" strokeWidth={1} /></g> },
  { id: 'store', run: true, icon: <g><path d="M9.500 7V2.500H20.500V7" stroke="#3bb0e8" strokeWidth={2.400} /><path d="M0 6H30V27Q30 30 27 30H3Q0 30 0 27Z" fill="#f4f4f4" /><path d="M9 12H14.500V17.500H9Z" fill="#f25022" /><path d="M15.700 12H21.200V17.500H15.700Z" fill="#7fba00" /><path d="M9 18.700H14.500V24.200H9Z" fill="#00a4ef" /><path d="M15.700 18.700H21.200V24.200H15.700Z" fill="#ffb900" /></g> },
  { id: 'settings', icon: <g><circle cx={15} cy={15} r={11.500} stroke="#848d97" strokeWidth={6} strokeDasharray="7.200 4.842" transform="rotate(12 15 15)" /><circle cx={15} cy={15} r={9} stroke="#848d97" strokeWidth={4.500} /><circle cx={15} cy={15} r={5.500} fill="#1468b8" /></g> },
  { id: 'chrome-profile', run: true, icon: <g><ChromeMark /><Face x={26} y={3} r={9.500} /></g> },
  { id: 'notepad', run: true, icon: <g><rect x={4} y={2} width={22} height={25} rx={1.500} fill="#4cc0dc" /><path d="M4 26H26V28Q26 30 24 30H6Q4 30 4 28Z" fill="#c96a1e" /><path d="M4 25H26V27.500H4Z" fill="#f4f4f4" /><path d="M8 10H22M8 14.500H22M8 19H18" stroke="#0d6a8c" strokeWidth={2} /><path d="M7 0V4M11 0V4M15 0V4M19 0V4M23 0V4" stroke="#0d6a8c" strokeWidth={1.600} /></g> },
  { id: 'terminal', run: true, icon: <g><rect x={0} y={4} width={30} height={23} rx={1.500} fill="#3f3f41" /><path d="M0 8V5Q0 4 1 4H29Q30 4 30 5V8Z" fill="#a8a8a8" /><path d="M5 12 10 17 5 22" stroke="#e8e8e8" strokeWidth={2.200} /><path d="M13 22.500H22" stroke="#e8e8e8" strokeWidth={2} /></g> },
  { id: 'snip', run: true, icon: <g><rect x={0} y={0} width={22} height={22} rx={3} fill="#f1eeee" /><rect x={4} y={4} width={13} height={12} stroke="#d8341c" strokeWidth={2.400} strokeDasharray="2.500 1.500" /><path d="M17 13V24M14 18H26" stroke="#9aa3ad" strokeWidth={2.500} /><circle cx={17} cy={27} r={2.700} stroke="#1b90e0" strokeWidth={2} /><circle cx={28} cy={17} r={2.700} stroke="#1b90e0" strokeWidth={2} /></g> },
  { id: 'pycharm', run: true, icon: <g><path d="M12 0H27Q30 0 30 4V20L18 30H0V12Z" fill="#18d68c" /><path d="M14 0H27Q30 0 30 4V14Z" fill="#f8ec3c" /><path d="M0 12 6 5V24H24L18 30H3Q0 30 0 27Z" fill="#12c4f2" /><rect x={6} y={5} width={18.500} height={20} fill="#060606" /><text x={8} y={14.500} fontSize={9.500} fontWeight={700} fill="#fff">PC</text><path d="M9 21.500H15" stroke="#fff" /></g> },
  { id: 'powerbi', active: true, icon: <g><rect x={16.500} y={0} width={10} height={30} rx={1} fill="#e0a010" /><rect x={10} y={7} width={10.500} height={23} rx={1} fill="#f2cb47" /><rect x={3.500} y={15} width={10.500} height={15} rx={1} fill="#fbe086" /></g> },
];

/* ---------- page ---------- */

export default function App() {
  return (
    <Shell>
      <GlobalStyle />
      <TitleBar>
        <QuickTools>
          <Svg s={21} h={20}>
            <path d="M1 1H19.500V19H4L1 16ZM5 1V9H15.500V1M6 19V13H14.500V19M9 14V19" stroke="#f3f2f1" strokeWidth={1.300} />
          </Svg>
          <Svg s={20} h={20}><path d="M2 1V8.500H9.500M2 8Q7 1 13 2.500 18 5 16.500 10 15 14 8 19" stroke="#f3f2f1" /></Svg>
          <Svg s={18} h={20}><path d="M16.500 1V8.500H9M16.500 8Q11 1 5.500 2.500 .5 5 2 10 3.500 14 10 19" stroke="#797775" /></Svg>
        </QuickTools>
        <FileTitle>
          <Fit w={247}>Task_2 • Last saved: Today at 4:29 pm</Fit>
          <FileTitleArrow><Svg s={12} h={7}><path d="M.5 .5H10.500L5.500 6.500Z" fill="#fff" /></Svg></FileTitleArrow>
        </FileTitle>
        <SignIn>
          <Fit w={45.5}>Sign in</Fit>
          <Svg s={26}>
            <circle cx={13} cy={13} r={12.500} fill="#f3f2f1" />
            <circle cx={13} cy={7.500} r={3.800} stroke="#1b1a19" strokeWidth={1.800} />
            <path d="M6 14H20Q20 21.500 13 21.500 6 21.500 6 14Z" stroke="#1b1a19" strokeWidth={1.800} />
          </Svg>
        </SignIn>
        <WindowButtons>
          <Svg s={14}><path d="M0 7.500H13.500" stroke="#fff" /></Svg>
          <Svg s={14}><rect x={1} y={2} width={12} height={12} rx={2} stroke="#fff" strokeWidth={1.300} /></Svg>
          <Svg s={14}><path d="M.5 2 13.500 15M13.500 2 .5 15" stroke="#fff" strokeWidth={1.300} /></Svg>
        </WindowButtons>
      </TitleBar>

      <RibbonTabs>
        {tabs.map(([t, w], i) => (
          <RibbonTab key={t} $active={t === 'Home'} $wide={i === 0}><Fit w={w}>{t}</Fit></RibbonTab>
        ))}
        <ShareButton>
          <Svg s={20} h={18}>
            <path d="M4 5H1V17H15V13M5 13Q6 6.500 12 6.500V9.500L18.500 5 12 1V3.500Q5 4 5 13Z" stroke="#fff" strokeWidth={1.500} />
          </Svg>
          <ShareLabel><Fit w={38}>Share</Fit></ShareLabel>
          <Svg s={13} h={8}><path d="M1 1 6.500 6.500 12 1" stroke="#fff" /></Svg>
        </ShareButton>
      </RibbonTabs>

      <Ribbon>
        <GroupBox $w={201}>
          <GroupItems $pad={14}>
            <Command $w={41} $off>
              <Svg s={44} vb="-6 -3 44 44"><Clipboard /></Svg>
              <CommandLine><Fit w={34}>Paste</Fit></CommandLine>
            </Command>
            <ClipRows>
              <ClipRow><ScissorsIcon /><Fit w={23}>Cut</Fit></ClipRow>
              <ClipRow><CopyIcon /><Fit w={34}>Copy</Fit></ClipRow>
              <ClipRow><BrushIcon /><Fit w={98}>Format painter</Fit></ClipRow>
            </ClipRows>
          </GroupItems>
          <GroupLabel><Fit w={53.5}>Clipboard</Fit></GroupLabel>
        </GroupBox>
        {groups.map((g) => <RibbonGroup key={g.label} g={g} />)}
        <CollapseArrow><Svg s={10} h={8}><path d="M.5 6.500 5 1.500 9.500 6.500" stroke={INK} strokeWidth={2} /></Svg></CollapseArrow>
      </Ribbon>

      <Workspace>
        <ViewRail>
          <RailItem $active><Svg s={20}><path d="M1.500 1V18.500H19M5 6H7.500V15.500H5ZM10 9H12.500V15.500H10ZM15 3H17.500V15.500H15Z" stroke={INK} strokeWidth={1.500} /></Svg></RailItem>
          <RailItem><Svg s={22}><rect x={1} y={1.500} width={20} height={19} stroke="#797775" /><path d="M1 3.500H21" stroke="#797775" strokeWidth={3} /><path d="M1 9.500H21M1 15H21M7.500 4V20M14.500 4V20" stroke="#797775" /></Svg></RailItem>
          <RailItem><Svg s={24}><path d="M1 8H10V17H1ZM1 11H10M14 1H23V10H14ZM14 4H23M14 14H23V23H14ZM14 17H23M5 8V5H14M8 17V20H14" stroke="#797775" /></Svg></RailItem>
          <RailItem>
            <Svg s={22} vb="0 0 22 22">
              <path d="M5 13V1H12L17 6V15M12 1V7H17M17 6Q20 12 18 19H15" stroke="#797775" />
              <path d="M0 13H16V23H0Z" fill="#f3f2f1" />
              <text x={-1} y={21} fontSize={8.500} fontWeight={700} fill="#797775">DAX</text>
            </Svg>
          </RailItem>
        </ViewRail>

        <Center>
          <CanvasRow>
            <Canvas>
              <StoryBox>
                <StoryText>
                  {story.map((l, i) => (
                    <StoryLine key={i} $gap={l.gap}>
                      {l.runs.map(([t, w, b], k) => <Fit key={k} w={w} bold={b}>{t}</Fit>)}
                    </StoryLine>
                  ))}
                </StoryText>
                <StoryScroll />
              </StoryBox>
            </Canvas>
            <SidePane $w={41} $white>
              <DoubleChevron />
              <Svg s={16} h={47} vb="-2 -18.500 16 47"><path d="M13 1.500V16.500L6.500 10.500H1V7.500H6.500Z" stroke={INK} strokeWidth={1.400} /></Svg>
              <VerticalTitle><Fit w={53.5} vertical>Filters</Fit></VerticalTitle>
            </SidePane>
          </CanvasRow>
          <PageStrip>
            <LayoutButton $w={56} $active>
              <Svg s={26} h={27}><path d="M1 9H24V21H1ZM12.500 21V25M8 25.500H17" stroke="#484644" strokeWidth={1.600} /></Svg>
              <ActiveMark />
            </LayoutButton>
            <LayoutButton $w={53}>
              <Svg s={17} h={32} vb="0 -6 17 32"><rect x={0.5} y={1} width={16} height={23.500} rx={1.500} stroke="#605e5c" strokeWidth={2} /><path d="M6.500 21H10.500" stroke="#605e5c" /></Svg>
            </LayoutButton>
            <PageArrows>
              <Svg s={6} h={10}><path d="M6 0V10L0 5Z" fill="#c8c6c4" /></Svg>
              <Svg s={6} h={10}><path d="M0 0V10L6 5Z" fill="#c8c6c4" /></Svg>
            </PageArrows>
            <PageTab $w={95}><Fit w={43}>Page 1</Fit></PageTab>
            <PageTab $w={87} $active><Fit w={35.5}>Story</Fit></PageTab>
            <AddPage><Svg s={14}><path d="M7 0V14M0 7H14" stroke="#fff" strokeWidth={4} /></Svg></AddPage>
          </PageStrip>
        </Center>

        <SidePane $w={43}>
          <DoubleChevron />
          <Svg s={4} h={19}>{null}</Svg>
          <VerticalTitle><Fit w={134} vertical>Quick measure</Fit></VerticalTitle>
        </SidePane>

        <VizPane>
          <PaneHead $right={10}><Fit w={123.5}>Visualizations</Fit><DoubleChevron right /></PaneHead>
          <BuildLabel><Fit w={77.5}>Build visual</Fit></BuildLabel>
          <ModeRow>
            <ModeTile>
              <Svg s={30}>
                <path d="M0 1H24" stroke={INK} strokeWidth={1.600} />
                <path d="M1 7H29V16H1ZM1 20.500H29V29.500H1Z" fill={GREEN} stroke={INK} strokeDasharray="3 1.500" strokeWidth={1.600} />
              </Svg>
            </ModeTile>
            <Svg s={32} h={32}>
              <path d="M22 13V10L14 1.500H1.500V30H6M14 1.500V10H22" stroke={INK} strokeWidth={1.400} fill="#fafafa" />
              <path d="M30 12 15.500 23 18 25.500Z" fill="#fff" stroke={INK} strokeWidth={1.400} strokeLinejoin="round" />
              <path d="M9 30Q13 28 12.500 24.500 15 22 18 24.500 19.500 28 17 29.500 13 31 9 30Z" fill={INK} />
            </Svg>
          </ModeRow>
          <Svg s={225} h={17}><path d="M0 15.500H20L30 6 40 15.500H225" stroke="#8a8886" strokeWidth={1.200} /></Svg>
          <VizGrid>{vizIcons.map((v, i) => <Svg key={i} s={24}>{v}</Svg>)}</VizGrid>
          <More><Svg s={20} h={3}><path d="M0 1H2.500M8 1H10.500M16 1H18.500" stroke={INK} strokeWidth={2.400} /></Svg></More>
          <WellSection>
            <WellTitle><Fit w={42.5}>Values</Fit></WellTitle>
            <DropWell $h={35} $top={7} $pad={12.5}><Fit w={134}>Add data fields here</Fit></DropWell>
            <WellTitle $strong $top={14}><Fit w={87}>Drill through</Fit></WellTitle>
            <ToggleRow $top={10}><Fit w={83}>Cross-report</Fit><Toggle><Knob /><Fit w={16}>Off</Fit></Toggle></ToggleRow>
            <ToggleRow $top={14}><Fit w={92.5}>Keep all filters</Fit><Toggle $on><Knob $on /><Fit w={15}>On</Fit></Toggle></ToggleRow>
            <DropWell $h={32} $top={13} $pad={10}><Fit w={188.5}>Add drill-through fields here</Fit></DropWell>
          </WellSection>
        </VizPane>

        <DataPane>
          <PaneHead $right={9}><Fit w={41.5}>Data</Fit><DoubleChevron right /></PaneHead>
          <SearchBox>
            <Svg s={18}><circle cx={7.500} cy={7.500} r={6.500} stroke="#484644" strokeWidth={1.300} /><path d="M12 12 17.500 17.500" stroke="#484644" strokeWidth={1.300} /></Svg>
            <Fit w={51.5}>Search</Fit>
          </SearchBox>
          <TreeArea>
            <Tree>
              <TreeRoot>
                <Svg s={15} h={9}><path d="M.5 1 7.500 8 14.500 1" stroke="#484644" strokeWidth={1.300} /></Svg>
                <RootIcon><Svg s={16}><rect x={1} y={1} width={14} height={14} rx={2.500} stroke={DARK} strokeWidth={1.600} /><path d="M1 5.500H15M1 10.500H15M5.500 1V15M10.500 1V15" stroke={DARK} strokeWidth={1.300} /></Svg></RootIcon>
                <Fit w={72}>Superstore</Fit>
              </TreeRoot>
              {fields.map((f) => (
                <FieldRow key={f.n}>
                  <div>{f.k === 'date' && <Svg s={10} h={15}><path d="M1 .5 8 7.500 1 14.500" stroke="#484644" strokeWidth={1.300} /></Svg>}</div>
                  <CheckBox />
                  <div>{f.k && fieldGlyph[f.k]}</div>
                  <FieldName $wide={f.k !== 'calc'}><Fit w={f.w}>{f.n}</Fit></FieldName>
                  {f.k === 'calc' && (
                    <Svg s={14}><path d="M7 1 13.500 13.500H.5ZM7 5V10M7 11V12.500" stroke="#d13438" strokeWidth={1.200} /></Svg>
                  )}
                </FieldRow>
              ))}
            </Tree>
            <TreeScroll />
          </TreeArea>
        </DataPane>
      </Workspace>

      <StatusBar>
        <Fit w={74}>Page 2 of 2</Fit>
        <ZoomTools>
          <Svg s={154} h={16}>
            <path d="M1 7H7M145 7.500H154M149.500 3V12" stroke="#484644" strokeWidth={2} />
            <path d="M13 7.500H138" stroke="#605e5c" strokeWidth={1.200} /><path d="M75 4V11" stroke="#605e5c" />
            <rect x={53} y={1} width={5} height={13} fill="#605e5c" />
          </Svg>
          <ZoomValue><Fit w={28}>72%</Fit></ZoomValue>
          <Svg s={21} h={16}>
            <rect x={1} y={1} width={18.500} height={14} stroke="#605e5c" strokeWidth={1.600} />
            <path d="M4 7V4H7M13.500 4H16.500V7M16.500 9.500V12.500H13.500M7 12.500H4V9.500" stroke="#605e5c" strokeWidth={1.400} />
          </Svg>
        </ZoomTools>
      </StatusBar>

      <TaskBar>
        <WidgetArea>
          <Svg s={44}>
            <defs><linearGradient id="sun" x1="0" y1="0" x2=".6" y2="1"><stop offset="0" stopColor="#f5b13c" /><stop offset="1" stopColor="#f26a10" /></linearGradient></defs>
            <circle cx={15} cy={22} r={12.500} fill="url(#sun)" />
            <circle cx={23.500} cy={11} r={9.700} fill="#c42b1c" />
            <text x={23.500} y={16} fontSize={14} textAnchor="middle" fill="#fff">8</text>
          </Svg>
        </WidgetArea>
        {apps.map((a) => (
          <Slot key={a.id}>
            {a.active ? (
              <ActiveTile><Svg s={30}>{a.icon}</Svg><RunningDot $on /></ActiveTile>
            ) : (
              <><Svg s={30}>{a.icon}</Svg>{a.run && <RunningDot />}</>
            )}
          </Slot>
        ))}
        <Tray>
          <TrayIcon $w={14}><Svg s={14} h={9}><path d="M1 8 7 1.500 13 8" stroke="#fff" strokeWidth={1.700} /></Svg></TrayIcon>
          <TrayIcon $w={64}><Svg s={22} h={16}><path d="M5 15Q0 14 1 10 2 7 5 7 7 1 12 2 16 3 16 7L8 15Z" fill="#9b9b9b" /><path d="M6 15Q3 14 4 11 6 8 9 9 12 5 16 8 21 9 21 12 20 15 17 15Z" fill="#fff" /></Svg></TrayIcon>
          <TrayIcon $w={18}><Svg s={22} h={22}><path d="M2 10Q3 3 10 2 16 2 19 7M19.500 2V7.500H14M2 12Q2 18 8 20M1 14 2 12 6 15" stroke="#fff" strokeWidth={1.300} /><circle cx={15.500} cy={16} r={5.500} fill="#ff9a1f" /></Svg></TrayIcon>
          <TrayStack $w={77}><Fit w={29}>ENG</Fit><Fit w={15}>IN</Fit></TrayStack>
          <TrayIcon $w={20}><Svg s={20} h={17}><path d="M1 6.500Q10-2.500 19 6.500M4 9.800Q10 3.800 16 9.800M7 13Q10 10 13 13" stroke="#fff" /><circle cx={10} cy={14.500} r={1.600} fill="#fff" /></Svg></TrayIcon>
          <TrayIcon $w={38}><Svg s={20} h={18}><path d="M1 6.500H4L9 2V16L4 11.500H1ZM12 6Q13.500 9 12 12M14.500 4Q17.500 9 14.500 14M17 2Q21 9 17 16" stroke="#fff" strokeWidth={1.300} /></Svg></TrayIcon>
          <TrayIcon $w={24}><Svg s={21} h={14}><rect x={1} y={1} width={16} height={12} rx={3} stroke="#fff" strokeWidth={1.400} /><rect x={3} y={3} width={7} height={8} rx={1} fill="#fff" /><path d="M19 5V9" stroke="#fff" strokeWidth={2} /></Svg></TrayIcon>
          <TrayStack $w={94} $right><Fit w={37}>17:33</Fit><Fit w={78.5}>08-04-2025</Fit></TrayStack>
          <TrayIcon $w={38}><Svg s={17} h={20}><path d="M8.500 1Q14 1.500 14 7V12L16.500 16H.5L3 12V7Q3 1.500 8.500 1ZM5.500 17.500H11.500Q10.500 19.500 8.500 19.500 6.500 19.500 5.500 17.500Z" fill="#83d8fb" /></Svg></TrayIcon>
        </Tray>
      </TaskBar>
    </Shell>
  );
}
